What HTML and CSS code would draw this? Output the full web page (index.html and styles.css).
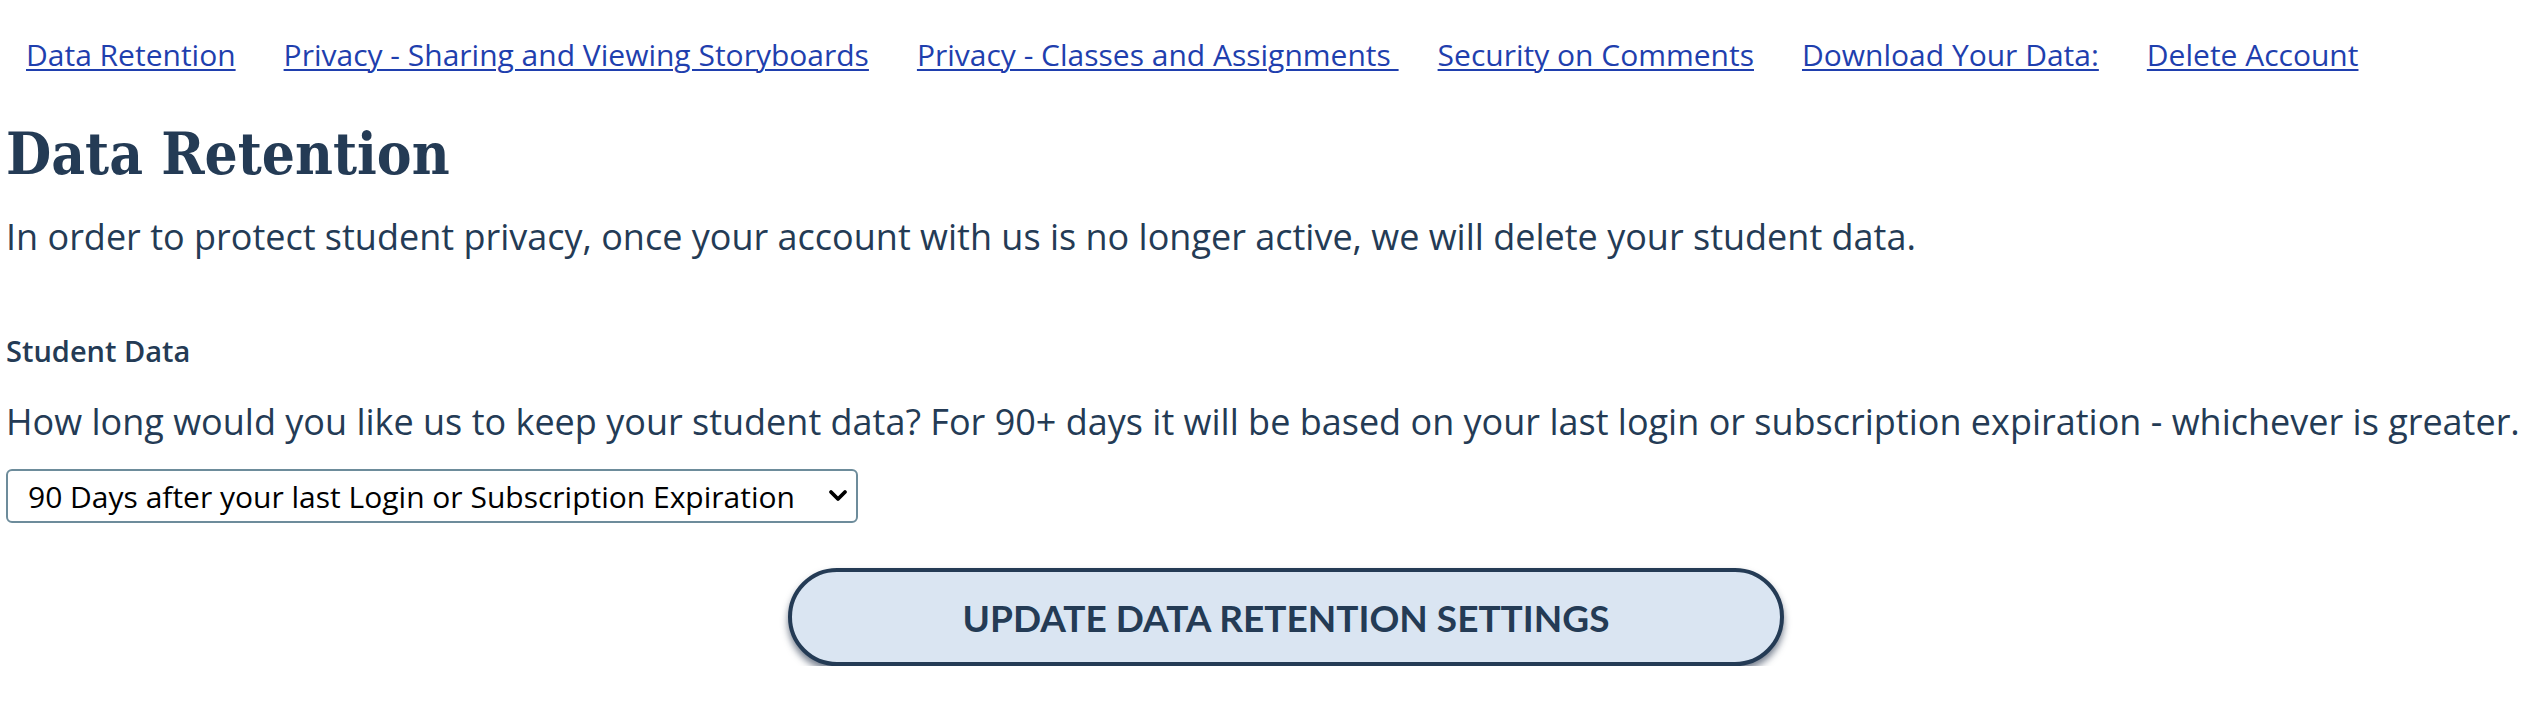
FILE: index.html
```html
<!DOCTYPE html>
<html lang="en">
<head>
<meta charset="utf-8">
<title>Data Retention</title>
<link rel="stylesheet" href="styles.css">
</head>
<body>
<nav class="subnav">
  <a href="#">Data Retention</a>
  <a href="#">Privacy - Sharing and Viewing Storyboards</a>
  <a href="#" class="trail">Privacy - Classes and Assignments&nbsp;</a>
  <a href="#">Security on Comments</a>
  <a href="#">Download Your Data:</a>
  <a href="#">Delete Account</a>
</nav>
<main class="content">
  <h1 class="title">Data Retention</h1>
  <p class="lead">In order to protect student privacy, once your account with us is no longer active, we will delete your student data.</p>
  <h2 class="label">Student Data</h2>
  <p class="question">How long would you like us to keep your student data? For 90+ days it will be based on your last login or subscription expiration - whichever is greater.</p>
  <div class="select-wrap">
    <span class="select-value">90 Days after your last Login or Subscription Expiration</span>
    <svg class="chev" viewBox="0 0 20 14" width="20" height="14"><path d="M3 3 L10 10 L17 3" fill="none" stroke="#000" stroke-width="3.8" stroke-linecap="round" stroke-linejoin="round"/></svg>
  </div>
  <div class="actions">
    <button class="btn">UPDATE DATA RETENTION SETTINGS</button>
  </div>
</main>
</body>
</html>
```

FILE: styles.css
```css
html, body {
  margin: 0;
  padding: 0;
  background: #ffffff;
}
body {
  font-family: "Open Sans", "Liberation Sans", sans-serif;
  color: #243b55;
}
.subnav {
  display: flex;
  gap: 48px;
  padding: 35px 0 0 26px;
  height: 80px;
  box-sizing: border-box;
}
.subnav a {
  font-size: 30px;
  line-height: 40px;
  color: #1f3fae;
  text-decoration: underline;
  text-underline-offset: 3px;
  text-decoration-thickness: 2px;
  white-space: pre;
}
.subnav a.trail {
  margin-right: -9px;
}
.content {
  padding: 0 6px;
}
.title {
  font-family: "DejaVu Serif Condensed", "DejaVu Serif", serif;
  font-weight: 700;
  font-size: 58px;
  line-height: 70px;
  margin: 39px 0 0 0;
  color: #243b55;
}
.lead {
  font-size: 36px;
  line-height: 48px;
  margin: 24px 0 0 0;
}
.label {
  font-size: 29px;
  font-weight: 600;
  line-height: 40px;
  margin: 70px 0 0 0;
}
.question {
  font-size: 36px;
  line-height: 48px;
  margin: 27px 0 0 0;
}
.select-wrap {
  display: flex;
  align-items: center;
  justify-content: space-between;
  width: 852px;
  height: 54px;
  box-sizing: border-box;
  margin-top: 23px;
  padding: 0 8px 0 20px;
  border: 2px solid #6d8c9b;
  border-radius: 6px;
  background: #fff;
}
.select-value {
  font-size: 30px;
  color: #000;
}
.chev {
  width: 20px;
  height: 14px;
}
.actions {
  display: flex;
  justify-content: center;
  padding-left: 32px;
  margin-top: 45px;
}
.btn {
  width: 996px;
  height: 98px;
  border: 4px solid #243b55;
  border-radius: 49px;
  background: #dae5f2;
  color: #243b55;
  font-family: "Lato", "Open Sans", sans-serif;
  font-weight: 700;
  font-size: 37px;
  box-shadow: 0 5px 7px rgba(30, 45, 70, 0.6);
}
```
